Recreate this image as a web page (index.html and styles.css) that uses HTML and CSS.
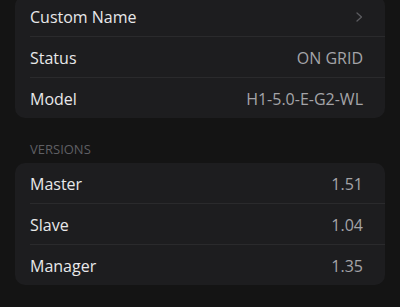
FILE: index.html
```html
<!DOCTYPE html>
<html lang="en">

<head>
    <meta charset="UTF-8">
    <title>Device Info</title>
    <link rel="stylesheet" href="styles.css">
</head>

<body>
    <div class="page">
        <div class="card card-top">
            <div class="row">
                <span class="label">Custom Name</span>
                <svg class="chev" width="7" height="10" viewBox="0 0 7 10">
                    <path d="M1 1 L5.5 5 L1 9" fill="none" stroke="#5c5c60" stroke-width="1.3" stroke-linecap="round" stroke-linejoin="round"/>
                </svg>
            </div>
            <div class="row">
                <span class="label">Status</span>
                <span class="value">ON GRID</span>
            </div>
            <div class="row">
                <span class="label">Model</span>
                <span class="value">H1-5.0-E-G2-WL</span>
            </div>
        </div>

        <h2 class="section">VERSIONS</h2>
        <div class="card">
            <div class="row">
                <span class="label">Master</span>
                <span class="value">1.51</span>
            </div>
            <div class="row">
                <span class="label">Slave</span>
                <span class="value">1.04</span>
            </div>
            <div class="row">
                <span class="label">Manager</span>
                <span class="value">1.35</span>
            </div>
        </div>
    </div>
</body>

</html>
```

FILE: styles.css
```css
body {
    margin: 0;
    background: #141414;
    font-family: "Open Sans", "Liberation Sans", sans-serif;
    overflow: hidden;
}

.page {
    padding: 0 15px;
}

/* 카드 */
.card {
    background: #1d1d1f;
    border-radius: 10px;
    padding-left: 15px;
}

.card-top {
    margin-top: -4px;
}

.row {
    height: 40px;
    display: flex;
    align-items: center;
    justify-content: space-between;
    padding-right: 22px;
    border-bottom: 1px solid #2a2a2c;
}

.row:last-child {
    border-bottom: none;
}

.label,
.value {
    font-size: 16px;
    padding-top: 1px;
}

.label {
    color: #e8e8ea;
}

.value {
    color: #a4a4a8;
}

.chev {
    display: block;
    margin-top: 1px;
}

/* 섹션 제목 */
.section {
    margin: 0;
    padding: 24px 0 6px 15px;
    color: #5f5f63;
    font-size: 13px;
    font-weight: normal;
    line-height: 15px;
}
```
